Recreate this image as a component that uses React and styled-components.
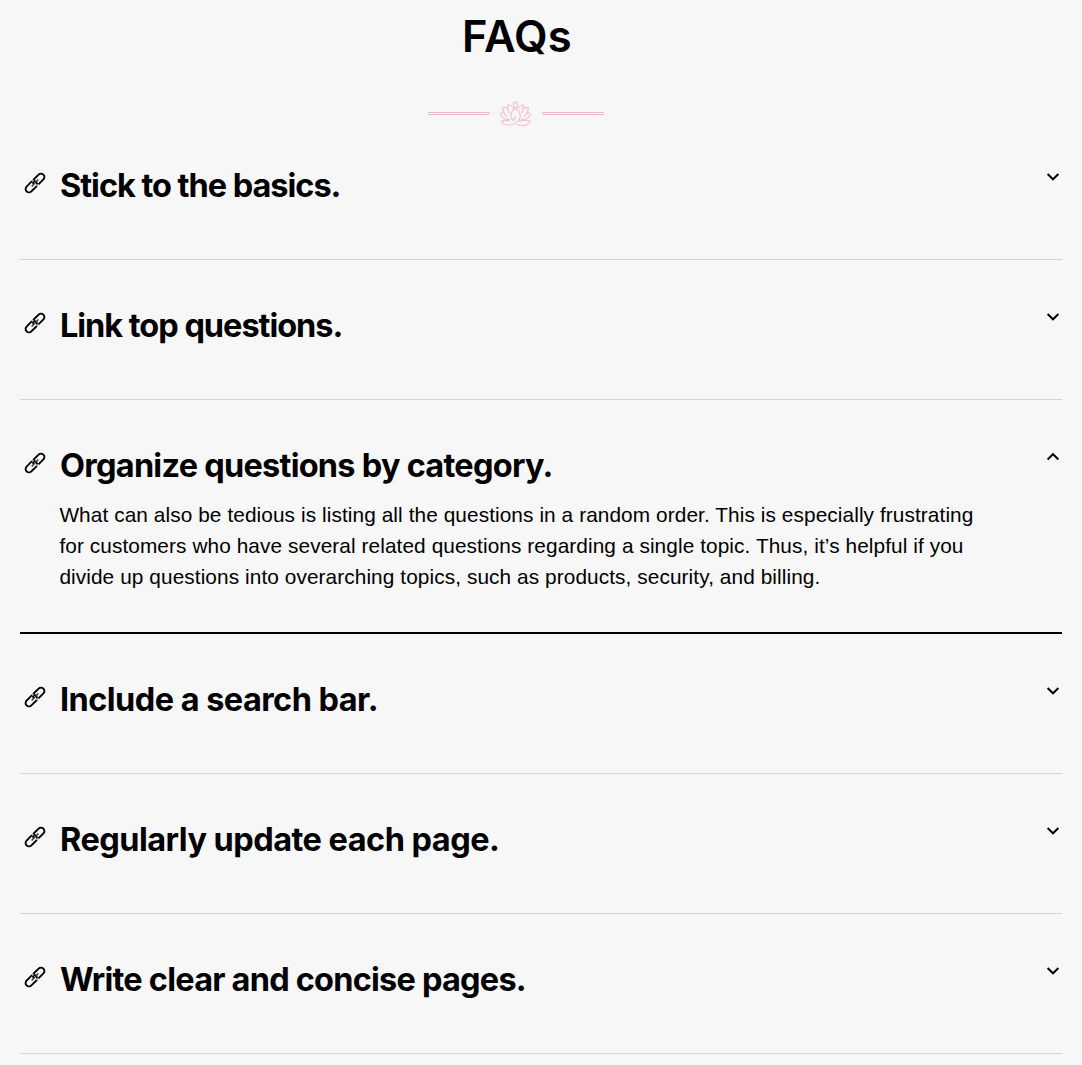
import React, { useState } from "react";
import styled, { createGlobalStyle } from "styled-components";

const GlobalStyle = createGlobalStyle`
  * { box-sizing: border-box; }
  body { margin: 0; background: #f7f7f7; color: #000; }
`;

const Page = styled.main`
  height: 1065px;
  overflow: hidden;
  padding: 0 20px;
  background: #f7f7f7;
  font-family: "Liberation Sans", Arial, sans-serif;
`;

const Header = styled.header`
  height: 120px;
  width: 992px;
  display: flex;
  flex-direction: column;
  align-items: center;
`;

const Heading = styled.h1`
  margin: 6px 0 0 2px;
  height: 60px;
  font: 600 43.5px/60px Inter, sans-serif;
  letter-spacing: 0.2px;
`;

const Divider = styled.div`
  display: flex;
  align-items: flex-start;
  gap: 10px;
  height: 26px;
  margin-top: 35px;
`;

const Rule = styled.span`
  width: 62px;
  height: 3px;
  margin-top: 11px;
  border-top: 1px solid #ebbcc6;
  border-bottom: 1px solid #ebbcc6;
`;

const List = styled.div`
  margin: 0;
`;

const Item = styled.section`
  display: flex;
  align-items: flex-start;
  height: ${(p) => (p.$open ? 234 : 140)}px;
  padding-top: 44px;
  border-bottom: ${(p) => (p.$open ? "2px solid #000" : "1px solid #d5d5d5")};
`;

const IconSlot = styled.span`
  display: flex;
  width: 30px;
  margin-right: 9px;
  padding: 7px 0 0 3px;
`;

const Body = styled.div`
  flex: 1;
`;

const Title = styled.h2`
  margin: 0;
  height: 44px;
  padding-left: 1px;
  font: 700 32.5px/44px Inter, sans-serif;
  letter-spacing: ${(p) => p.$track}px;
  white-space: nowrap;
`;

const Answer = styled.p`
  margin: 11px 0 0;
  padding-left: 0.4px;
  font-size: 20.8px;
  line-height: 31px;
  letter-spacing: 0.09px;
  white-space: pre-line;
`;

const Toggle = styled.button`
  display: flex;
  margin: 5px 1px 0 0;
  padding: 0;
  border: 0;
  background: none;
  cursor: pointer;
`;

const LinkIcon = () => (
  <svg width="24" height="24" viewBox="-12 -12 24 24" fill="none" stroke="#000" strokeWidth="1.9">
    <g transform="rotate(-45)">
      <rect x="-11.9" y="-3.4" width="13.4" height="6.8" rx="3.4" />
      <path d="M-1.5 2.200V-2.200" stroke="#f7f7f7" strokeWidth="3" />
      <path d="M1.500 3.400H8.500A3.400 3.400 0 0 0 8.500 -3.400H1.900A3.400 3.400 0 0 0 -1.500 0" />
      <path d="M-1 -3.400H1M-1 3.400H1" stroke="#b5b5b5" strokeWidth="2" />
      <path d="M-4.800 0H4.800" stroke="#333" strokeWidth="1.4" />
    </g>
  </svg>
);

const Chevron = ({ open }) => (
  <svg width="16" height="16" viewBox="0 0 16 16" fill="none" stroke="#000" strokeWidth="1.9">
    <path d={open ? "M2.6 10.5 8 5.2l5.4 5.3" : "M2.6 5 8 10.3 13.4 5"} />
  </svg>
);

const Lotus = () => (
  <svg width="32" height="26" viewBox="0 0 32 26" fill="none" stroke="#efc3cb" strokeWidth="1.15">
    <ellipse cx="15.500" cy="3.900" rx="2" ry="3" />
    <path d="M13.500 7.500Q11 4.500 8 3.700Q7.200 7.500 9 12M17.500 7.500Q20 4.500 23 3.700Q23.800 7.500 22 12" />
    <path d="M8 7.500Q5.500 6 2.800 6.500Q2.500 11.500 7 15.500M23 7.500Q25.500 6 28.200 6.500Q28.500 11.500 24 15.500" />
    <path d="M3.200 11.800Q1.500 11.700.7 13C1.200 16.800 5.500 18.700 10 18.500M27.800 11.800Q29.500 11.700 30.300 13C29.800 16.800 25.500 18.700 21 18.500" />
    <path d="M15.500 7.200C10.200 10.800 9.500 16.500 13.500 19.500C15.300 18 15.500 16.500 14.800 15M15.500 7.200C21 10.800 21.800 16.500 18 20C14 24.800 5.500 25.700 1.200 20.500Q5 18.300 9.500 20.300M19 20.500Q25 18.300 30 20C27.500 25.300 21.500 25.500 17 23.300" />
  </svg>
);

const questions = [
  { title: "Stick to the basics.", track: -1.03 },
  { title: "Link top questions.", track: -1.03 },
  {
    title: "Organize questions by category.",
    track: -0.75,
    answer:
      "What can also be tedious is listing all the questions in a random order. This is especially frustrating\nfor customers who have several related questions regarding a single topic. Thus, it’s helpful if you\ndivide up questions into overarching topics, such as products, security, and billing.",
  },
  { title: "Include a search bar.", track: -0.55 },
  { title: "Regularly update each page.", track: -0.53 },
  { title: "Write clear and concise pages.", track: -0.78 },
];

export default function App() {
  const [active, setActive] = useState(2);
  return (
    <>
      <GlobalStyle />
      <Page>
        <Header>
          <Heading>FAQs</Heading>
          <Divider>
            <Rule />
            <Lotus />
            <Rule />
          </Divider>
        </Header>
        <List>
          {questions.map((q, i) => {
            const open = active === i && Boolean(q.answer);
            return (
              <Item key={q.title} $open={open}>
                <IconSlot><LinkIcon /></IconSlot>
                <Body>
                  <Title $track={q.track}>{q.title}</Title>
                  {open && <Answer>{q.answer}</Answer>}
                </Body>
                <Toggle
                  aria-label={q.title}
                  aria-expanded={open}
                  onClick={() => setActive(open ? -1 : i)}
                >
                  <Chevron open={open} />
                </Toggle>
              </Item>
            );
          })}
        </List>
      </Page>
    </>
  );
}
